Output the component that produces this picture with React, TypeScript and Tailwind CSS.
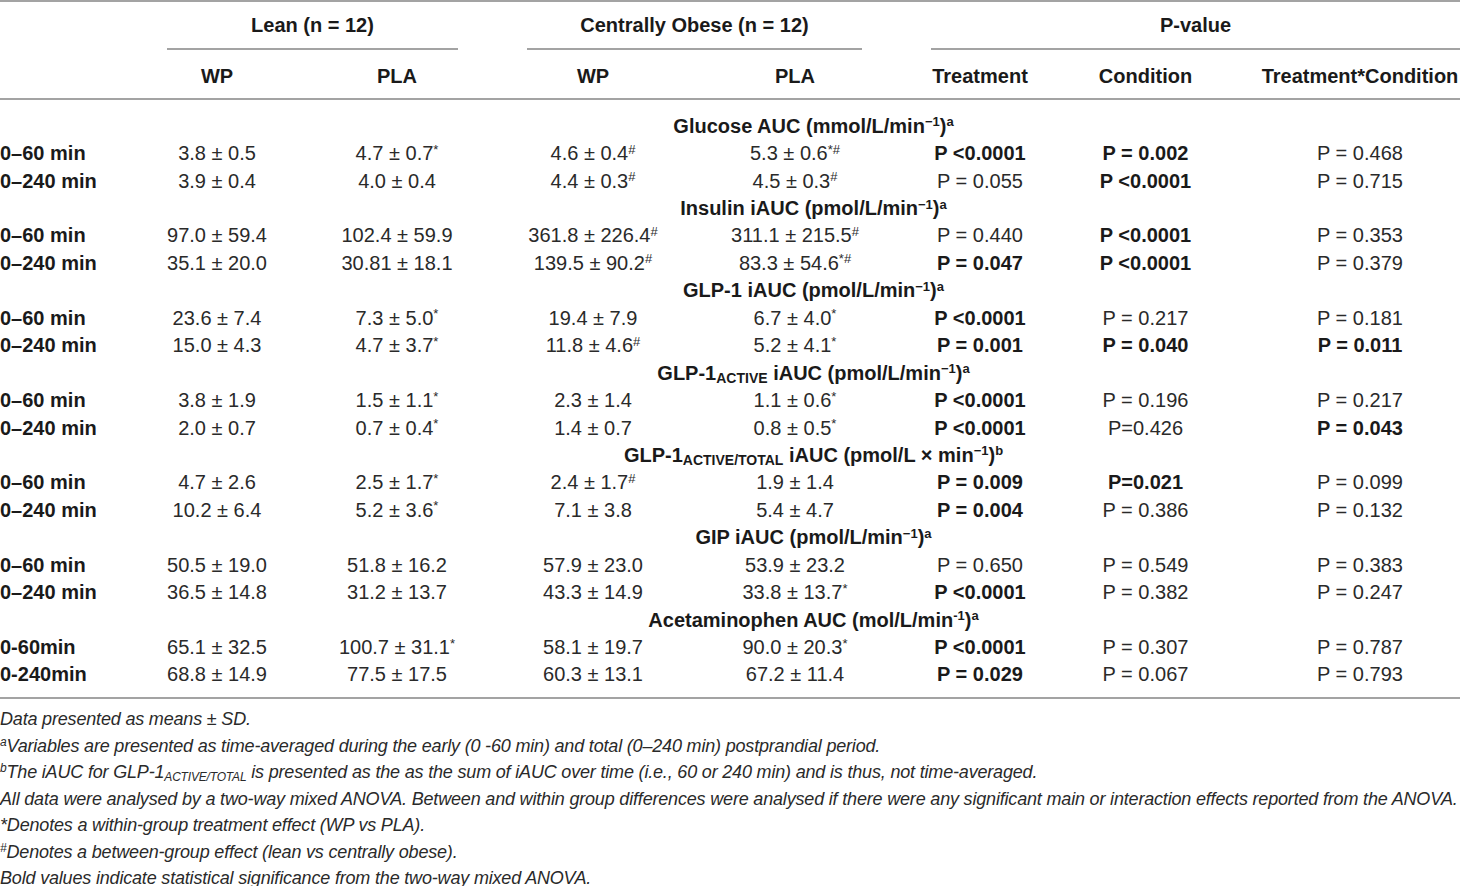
import React from "react";

type Section = {
  title: React.ReactNode;
  rows: { label: string; cells: string[] }[];
};

// "!" at the start = bold value; trailing * and # go up as superscripts
const Cell = ({ raw, className = "" }: { raw: string; className?: string }) => {
  const bold = raw.startsWith("!");
  let text = bold ? raw.slice(1) : raw;
  const m = text.match(/^(.*?)([*#]+)$/);
  const sup = m ? m[2] : "";
  if (m) text = m[1];
  return (
    <div
      className={`flex h-[27.45px] items-center justify-center whitespace-nowrap ${
        bold ? "font-bold text-[#1a1a1a]" : "text-[#2a2a2a]"
      } ${className}`}
    >
      <span>
        {text}
        {sup && <sup className="text-[13px]">{sup}</sup>}
      </span>
    </div>
  );
};

const Unit = ({ u, note }: { u: string; note: string }) => (
  <>
    ({u}
    <sup className="text-[13px]">−1</sup>)<sup className="text-[13px]">{note}</sup>
  </>
);

const sections: Section[] = [
  {
    title: (
      <>
        Glucose AUC <Unit u="mmol/L/min" note="a" />
      </>
    ),
    rows: [
      { label: "0–60 min", cells: ["3.8 ± 0.5", "4.7 ± 0.7*", "4.6 ± 0.4#", "5.3 ± 0.6*#", "!P <0.0001", "!P = 0.002", "P = 0.468"] },
      { label: "0–240 min", cells: ["3.9 ± 0.4", "4.0 ± 0.4", "4.4 ± 0.3#", "4.5 ± 0.3#", "P = 0.055", "!P <0.0001", "P = 0.715"] },
    ],
  },
  {
    title: (
      <>
        Insulin iAUC <Unit u="pmol/L/min" note="a" />
      </>
    ),
    rows: [
      { label: "0–60 min", cells: ["97.0 ± 59.4", "102.4 ± 59.9", "361.8 ± 226.4#", "311.1 ± 215.5#", "P = 0.440", "!P <0.0001", "P = 0.353"] },
      { label: "0–240 min", cells: ["35.1 ± 20.0", "30.81 ± 18.1", "139.5 ± 90.2#", "83.3 ± 54.6*#", "!P = 0.047", "!P <0.0001", "P = 0.379"] },
    ],
  },
  {
    title: (
      <>
        GLP-1 iAUC <Unit u="pmol/L/min" note="a" />
      </>
    ),
    rows: [
      { label: "0–60 min", cells: ["23.6 ± 7.4", "7.3 ± 5.0*", "19.4 ± 7.9", "6.7 ± 4.0*", "!P <0.0001", "P = 0.217", "P = 0.181"] },
      { label: "0–240 min", cells: ["15.0 ± 4.3", "4.7 ± 3.7*", "11.8 ± 4.6#", "5.2 ± 4.1*", "!P = 0.001", "!P = 0.040", "!P = 0.011"] },
    ],
  },
  {
    title: (
      <>
        GLP-1<sub className="text-[14px]">ACTIVE</sub> iAUC <Unit u="pmol/L/min" note="a" />
      </>
    ),
    rows: [
      { label: "0–60 min", cells: ["3.8 ± 1.9", "1.5 ± 1.1*", "2.3 ± 1.4", "1.1 ± 0.6*", "!P <0.0001", "P = 0.196", "P = 0.217"] },
      { label: "0–240 min", cells: ["2.0 ± 0.7", "0.7 ± 0.4*", "1.4 ± 0.7", "0.8 ± 0.5*", "!P <0.0001", "P=0.426", "!P = 0.043"] },
    ],
  },
  {
    title: (
      <>
        GLP-1<sub className="text-[14px]">ACTIVE/TOTAL</sub> iAUC <Unit u="pmol/L × min" note="b" />
      </>
    ),
    rows: [
      { label: "0–60 min", cells: ["4.7 ± 2.6", "2.5 ± 1.7*", "2.4 ± 1.7#", "1.9 ± 1.4", "!P = 0.009", "!P=0.021", "P = 0.099"] },
      { label: "0–240 min", cells: ["10.2 ± 6.4", "5.2 ± 3.6*", "7.1 ± 3.8", "5.4 ± 4.7", "!P = 0.004", "P = 0.386", "P = 0.132"] },
    ],
  },
  {
    title: (
      <>
        GIP iAUC <Unit u="pmol/L/min" note="a" />
      </>
    ),
    rows: [
      { label: "0–60 min", cells: ["50.5 ± 19.0", "51.8 ± 16.2", "57.9 ± 23.0", "53.9 ± 23.2", "P = 0.650", "P = 0.549", "P = 0.383"] },
      { label: "0–240 min", cells: ["36.5 ± 14.8", "31.2 ± 13.7", "43.3 ± 14.9", "33.8 ± 13.7*", "!P <0.0001", "P = 0.382", "P = 0.247"] },
    ],
  },
  {
    title: (
      <>
        Acetaminophen AUC (mol/L/min<sup className="text-[13px]">-1</sup>)<sup className="text-[13px]">a</sup>
      </>
    ),
    rows: [
      { label: "0-60min", cells: ["65.1 ± 32.5", "100.7 ± 31.1*", "58.1 ± 19.7", "90.0 ± 20.3*", "!P <0.0001", "P = 0.307", "P = 0.787"] },
      { label: "0-240min", cells: ["68.8 ± 14.9", "77.5 ± 17.5", "60.3 ± 13.1", "67.2 ± 11.4", "!P = 0.029", "P = 0.067", "P = 0.793"] },
    ],
  },
];

const cols = "grid grid-cols-[127px_180px_180px_212px_192px_178px_191px_200px]";

const App: React.FC = () => {
  return (
    <div className="w-[1460px] bg-white font-['Liberation_Sans',Arial,sans-serif] text-[20px] leading-none text-[#1a1a1a]">
      {/* header */}
      <div className="border-y-2 border-[#a3a3a3] font-bold">
        <div className={`${cols} h-[48px]`}>
          <div />
          <div className="col-span-2 ml-[40px] mr-[29px] flex items-center justify-center border-b-2 border-[#a3a3a3]">
            Lean (n = 12)
          </div>
          <div className="col-span-2 ml-[40px] mr-[29px] flex items-center justify-center border-b-2 border-[#a3a3a3]">
            Centrally Obese (n = 12)
          </div>
          <div className="col-span-3 ml-[40px] flex items-center justify-center border-b-2 border-[#a3a3a3]">
            P-value
          </div>
        </div>
        <div className={`${cols} h-[48px] items-center pt-1`}>
          <div />
          <div className="text-center">WP</div>
          <div className="text-center">PLA</div>
          <div className="text-center">WP</div>
          <div className="text-center">PLA</div>
          <div className="text-center">Treatment</div>
          <div className="pr-[38px] text-center">Condition</div>
          <div className="text-center">Treatment*Condition</div>
        </div>
      </div>

      {/* body */}
      <div className={`${cols} border-b-2 border-[#a3a3a3] pt-[12px] pb-[9px]`}>
        {sections.map((s, i) => (
          <React.Fragment key={i}>
            <div />
            <div className="col-span-7 flex h-[27.45px] items-center justify-center pl-[40px] font-bold whitespace-nowrap">
              <span>{s.title}</span>
            </div>
            {s.rows.map((r) => (
              <React.Fragment key={r.label}>
                <div className="flex h-[27.45px] items-center font-bold whitespace-nowrap">{r.label}</div>
                {r.cells.map((c, j) => (
                  <Cell key={j} raw={c} className={j === 5 ? "pr-[38px]" : ""} />
                ))}
              </React.Fragment>
            ))}
          </React.Fragment>
        ))}
      </div>

      {/* notes */}
      <div className="pt-[7px] font-['Liberation_Sans',Arial,sans-serif] text-[18px] leading-[26.5px] italic tracking-[-0.01em] text-[#2a2a2a]">
        <p>Data presented as means ± SD.</p>
        <p>
          <sup className="text-[12px]">a</sup>Variables are presented as time-averaged during the early (0 -60 min) and
          total (0–240 min) postprandial period.
        </p>
        <p>
          <sup className="text-[12px]">b</sup>The iAUC for GLP-1<sub className="text-[12px]">ACTIVE/TOTAL</sub> is
          presented as the as the sum of iAUC over time (i.e., 60 or 240 min) and is thus, not time-averaged.
        </p>
        <p>
          All data were analysed by a two-way mixed ANOVA. Between and within group differences were analysed if there
          were any significant main or interaction effects reported from the ANOVA.
        </p>
        <p>*Denotes a within-group treatment effect (WP vs PLA).</p>
        <p>
          <sup className="text-[12px]">#</sup>Denotes a between-group effect (lean vs centrally obese).
        </p>
        <p>Bold values indicate statistical significance from the two-way mixed ANOVA.</p>
      </div>
    </div>
  );
};

export default App;
